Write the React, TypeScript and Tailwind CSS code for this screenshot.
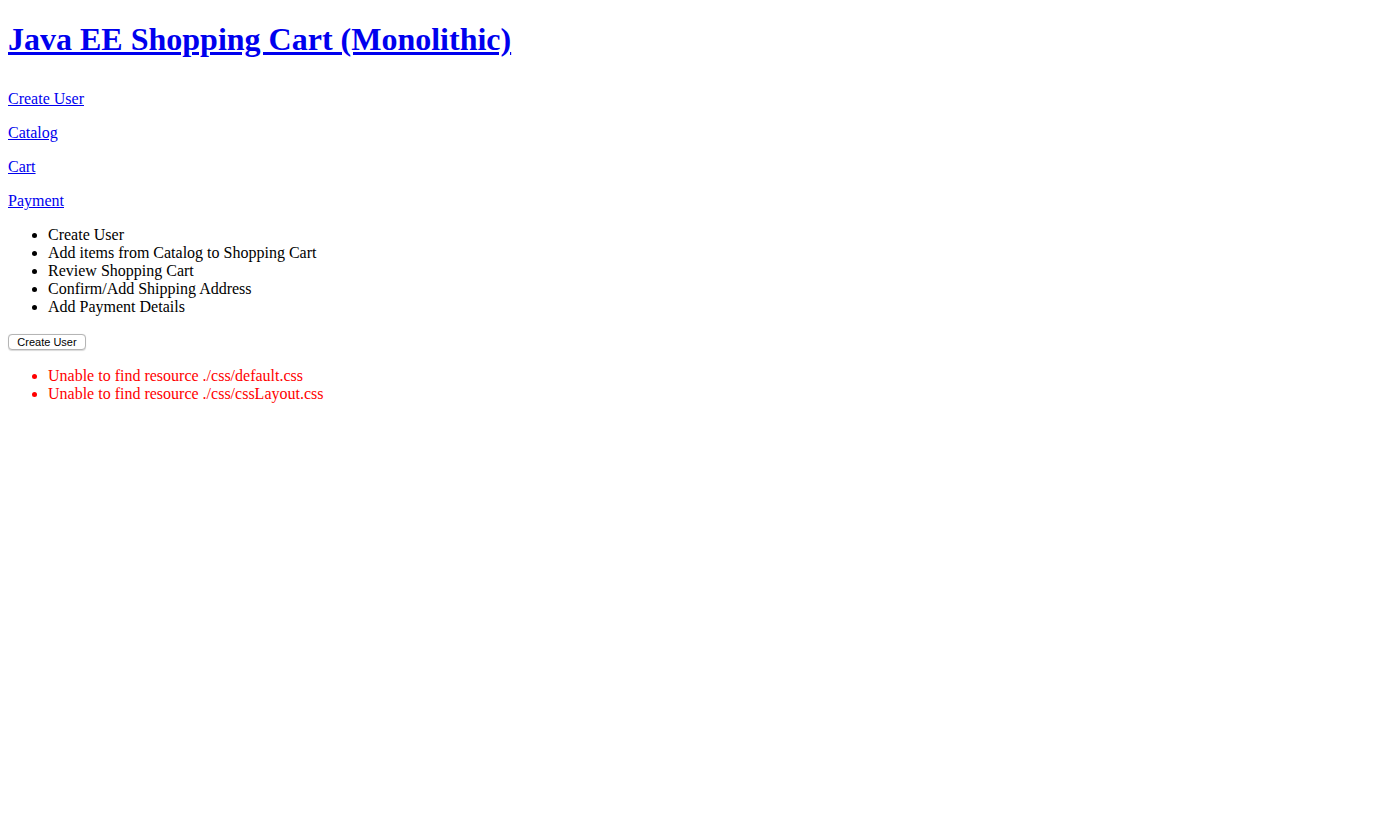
const steps = [
  "Create User",
  "Add items from Catalog to Shopping Cart",
  "Review Shopping Cart",
  "Confirm/Add Shipping Address",
  "Add Payment Details",
];

const navLinks = ["Create User", "Catalog", "Cart", "Payment"];

const errors = [
  "Unable to find resource ./css/default.css",
  "Unable to find resource ./css/cssLayout.css",
];

export default function App() {
  return (
    <div className="min-h-[826px] bg-white px-2 pt-[21px] font-['Liberation_Serif',serif] text-[16px] leading-[18px] text-black">
      {/* Header */}
      <h1 className="text-[32px] font-bold leading-[37px]">
        <a href="#" className="text-[#0000ee] underline">
          Java EE Shopping Cart (Monolithic)
        </a>
      </h1>

      {/* Navigation */}
      <div className="mt-[32px] flex flex-col items-start gap-4">
        {navLinks.map((label) => (
          <p key={label}>
            <a href="#" className="text-[#0000ee] underline">
              {label}
            </a>
          </p>
        ))}
      </div>

      {/* Steps */}
      <ul className="mt-4 list-disc pl-10">
        {steps.map((s) => (
          <li key={s}>{s}</li>
        ))}
      </ul>

      <form className="mt-[18px]" onSubmit={(e) => e.preventDefault()}>
        <button
          type="submit"
          className="flex h-4 w-[78px] items-center justify-center rounded-[4px] border border-[#b5b5b5] bg-white font-['Liberation_Sans',sans-serif] text-[11px] leading-none text-black shadow-[0_0.5px_1px_rgba(0,0,0,0.15)]"
        >
          Create User
        </button>
      </form>

      {/* Messages */}
      <ul className="mt-[17px] list-disc pl-10 text-[#ff0000]">
        {errors.map((m) => (
          <li key={m}>{m}</li>
        ))}
      </ul>
    </div>
  );
}
